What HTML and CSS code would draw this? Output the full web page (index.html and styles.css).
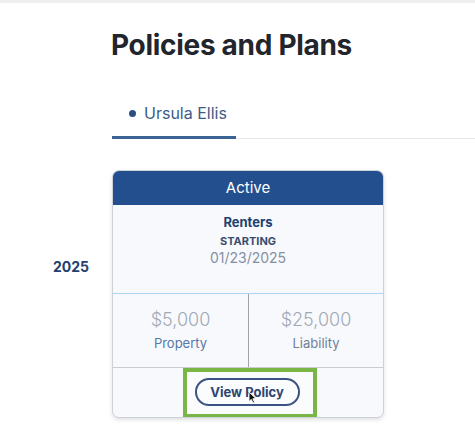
FILE: index.html
```html
<!DOCTYPE html>
<html lang="en">
<head>
<meta charset="utf-8">
<title>Policies and Plans</title>
<link rel="stylesheet" href="styles.css">
</head>
<body>
<div class="topbar"></div>
<main class="page">
  <h1 class="title">Policies and Plans</h1>
  <div class="tabs">
    <div class="tab"><span class="dot"></span><span>Ursula Ellis</span></div>
  </div>
  <section class="year-row">
    <div class="year">2025</div>
    <div class="card">
      <div class="card-head">Active</div>
      <div class="card-info">
        <div class="type">Renters</div>
        <div class="starting">STARTING</div>
        <div class="date">01/23/2025</div>
      </div>
      <div class="card-values">
        <div class="value">
          <div class="amount">$5,000</div>
          <div class="label label-blue">Property</div>
        </div>
        <div class="value">
          <div class="amount">$25,000</div>
          <div class="label">Liability</div>
        </div>
      </div>
      <div class="card-action">
        <div class="highlight">
          <button class="btn">View Policy</button>
          <svg class="cursor" width="9" height="13" viewBox="0 0 9 13"><path d="M1 1 L1 10.5 L3.3 8.4 L5 12 L6.6 11.3 L4.9 7.8 L8 7.6 Z" fill="#111" stroke="#fff" stroke-width="0.9" stroke-linejoin="round"/></svg>
        </div>
      </div>
    </div>
  </section>
</main>
</body>
</html>
```
FILE: styles.css
```css
* { box-sizing: border-box; }
html, body { margin: 0; padding: 0; background: #ffffff; }
body {
  font-family: Inter, "Noto Sans", "Liberation Sans", sans-serif;
  color: #23262d;
  width: 475px;
  height: 430px;
  overflow: hidden;
}
.topbar { height: 3px; background: #eeeeee; }
.page { display: flex; flex-direction: column; }
.title {
  margin: 25px 0 0 111px;
  font-size: 28px;
  line-height: 34px;
  font-weight: 700;
  color: #22252c;
  letter-spacing: -0.3px;
}
.tabs {
  margin: 41px 0 0 112px;
  border-bottom: 1px solid #e6e8ec;
  display: flex;
}
.tab {
  width: 124px;
  display: flex;
  align-items: center;
  gap: 8px;
  padding: 0 0 13px 17px;
  font-size: 16px;
  line-height: 20px;
  color: #3e5b86;
  border-bottom: 3px solid #3b6495;
  margin-bottom: -1px;
}
.dot {
  width: 7px;
  height: 7px;
  border-radius: 50%;
  background: #2c4f82;
  flex: none;
}
.year-row {
  display: flex;
  padding-left: 53px;
  margin-top: 31px;
}
.year {
  width: 59px;
  margin-top: 88px;
  font-size: 14px;
  line-height: 18px;
  font-weight: 700;
  color: #22416f;
  align-self: flex-start;
}
.card {
  width: 272px;
  border: 1px solid #cdd1d8;
  border-radius: 7px;
  background: #f7f9fd;
  box-shadow: 0 2px 4px rgba(0,0,0,0.12);
  overflow: hidden;
}
.card-head {
  height: 35px;
  margin: -1px -1px 0;
  background: #244f8f;
  color: #ffffff;
  font-size: 15px;
  font-weight: 400;
  display: flex;
  align-items: center;
  justify-content: center;
  border-radius: 7px 7px 0 0;
}
.card-info {
  height: 89px;
  border-bottom: 1px solid #a9d6f2;
  display: flex;
  flex-direction: column;
  align-items: center;
  padding-top: 8px;
}
.type { font-size: 13px; line-height: 18px; font-weight: 700; color: #20416f; }
.starting { font-size: 11px; line-height: 15px; font-weight: 700; color: #3b4d6f; margin-top: 3px; }
.date { font-size: 14px; line-height: 18px; color: #8590a3; }
.card-values {
  height: 74px;
  border-bottom: 1px solid #c9ccd2;
  display: grid;
  grid-template-columns: 1fr 1fr;
}
.value {
  display: flex;
  flex-direction: column;
  align-items: center;
  padding-top: 15px;
}
.value + .value { border-left: 1px solid #9ea3ab; }
.amount { font-size: 18px; line-height: 22px; color: #a2a9b4; font-weight: 300; }
.label { font-size: 13px; line-height: 18px; color: #6f7f98; margin-top: 3px; }
.label-blue { color: #5777a6; }
.card-action {
  height: 49px;
  display: flex;
  justify-content: center;
}
.highlight {
  position: relative;
  width: 134px;
  height: 50px;
  margin-left: 3px;
  border: 4px solid #79b646;
  display: flex;
  align-items: center;
  justify-content: center;
  background: #fafbfd;
}
.btn {
  width: 105px;
  height: 28px;
  margin-left: -5px;
  margin-top: -2px;
  border: 2px solid #3b5382;
  border-radius: 14px;
  background: #fbfcfe;
  color: #2f4470;
  font-family: Inter, "Noto Sans", "Liberation Sans", sans-serif;
  font-size: 13px;
  font-weight: 700;
  padding: 0;
}
.cursor {
  position: absolute;
  left: 61px;
  top: 19px;
}
```
